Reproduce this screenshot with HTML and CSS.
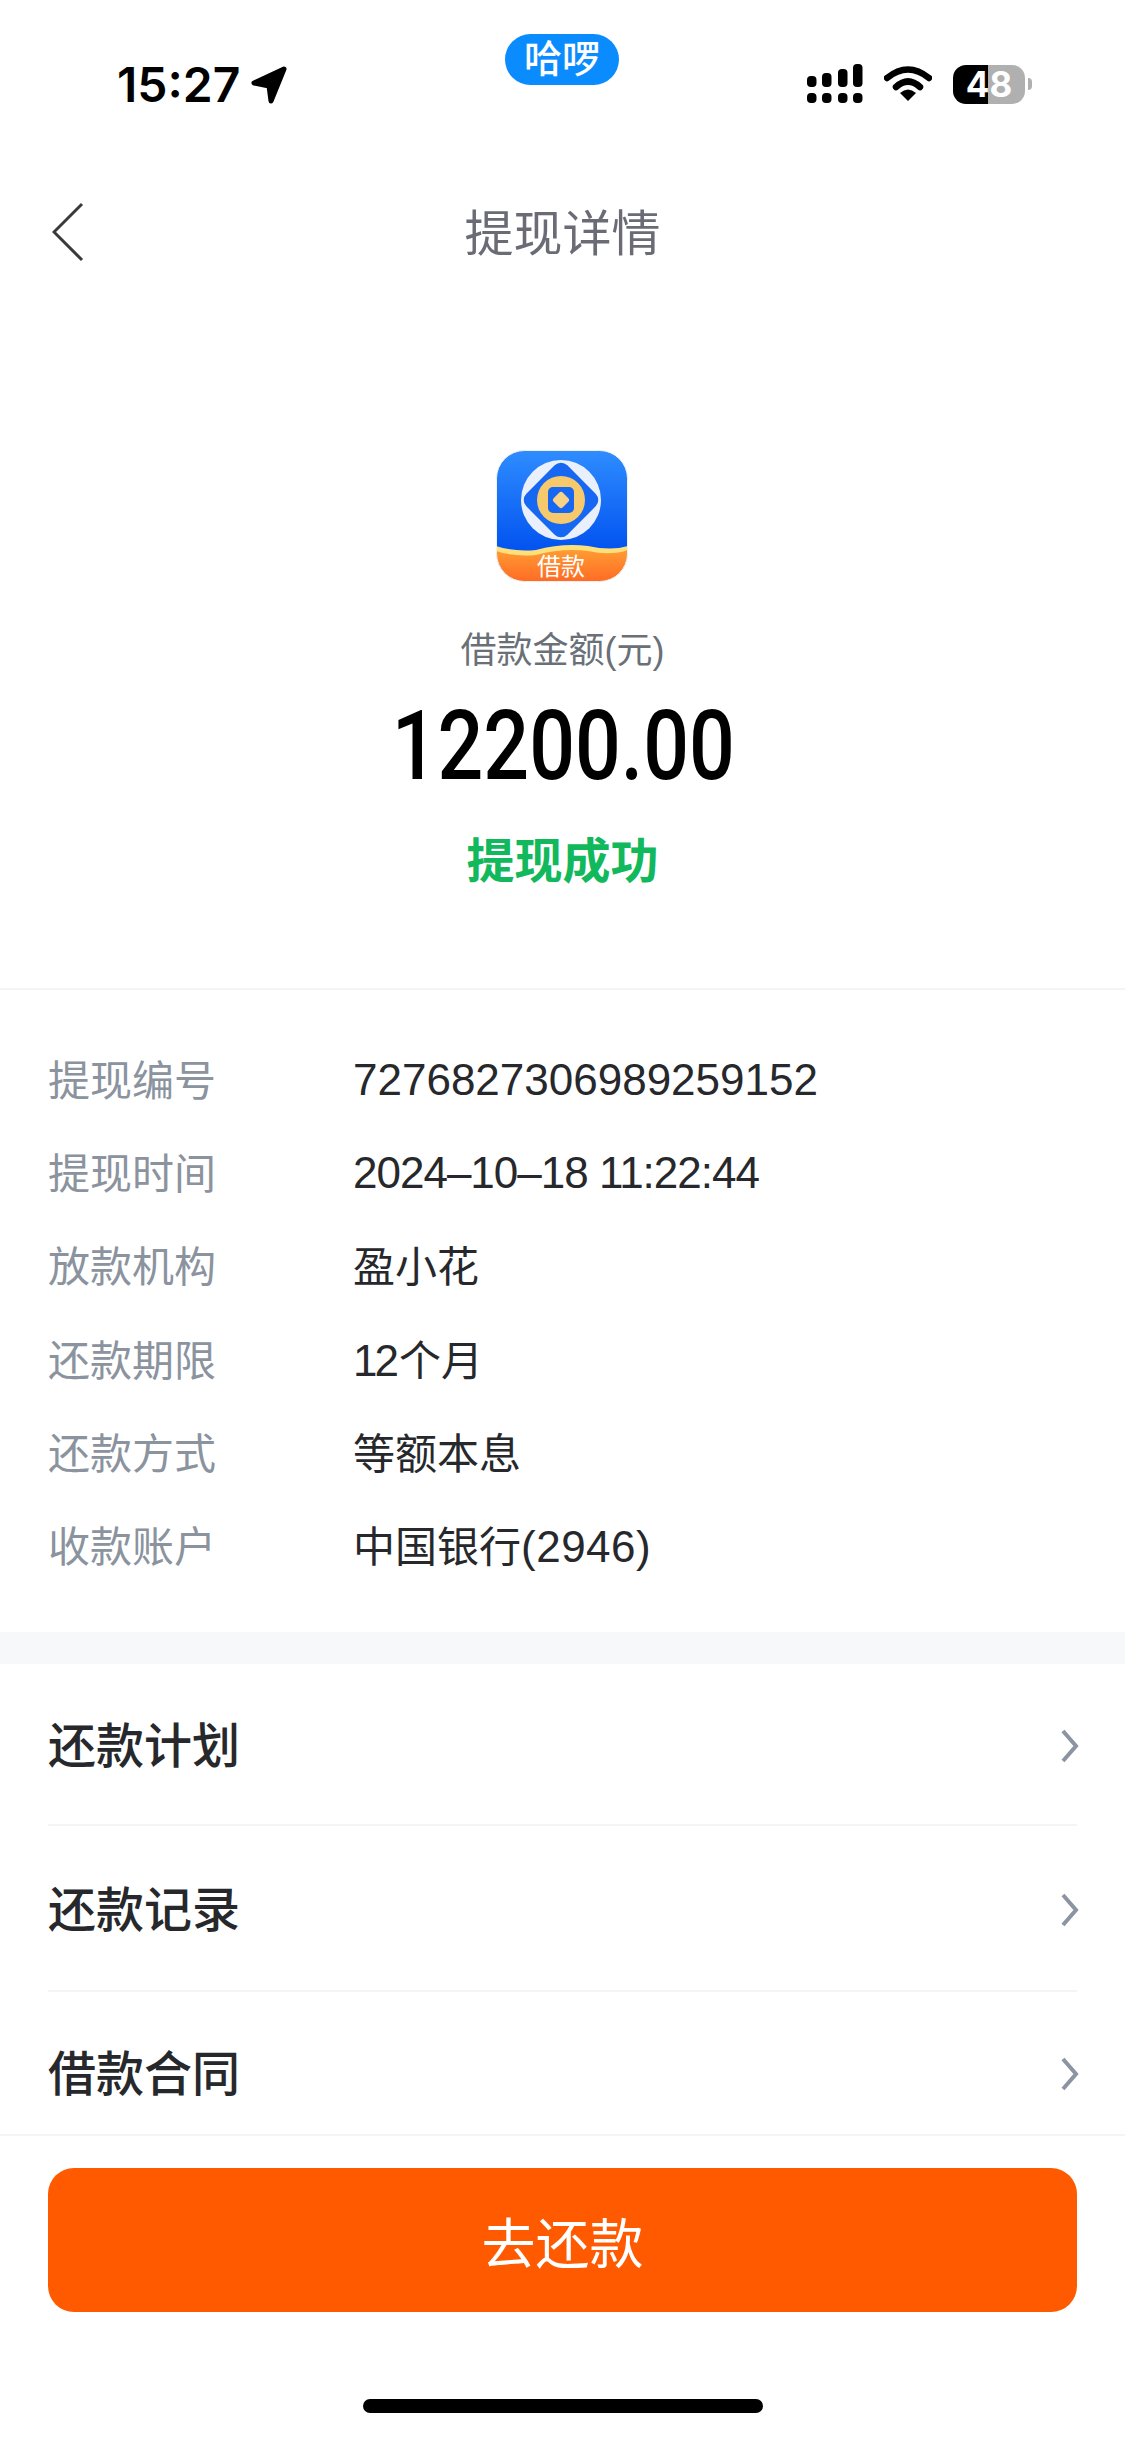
FILE: index.html
```html
<!DOCTYPE html>
<html lang="zh-CN">
<head>
    <meta charset="UTF-8">
    <meta name="viewport" content="width=device-width, initial-scale=1.0">
    <title>提现详情</title>
    <link rel="stylesheet" href="styles.css">
</head>
<body>
    <div class="screen">
        <div class="status-bar">
            <div class="status-left">
                <span class="clock">15:27</span>
                <svg class="arrow" width="36" height="38" viewBox="0 0 36 38"><path d="M33 3 L3 17 L18 20 L20 35 Z" fill="#000" stroke="#000" stroke-width="5" stroke-linejoin="round"/></svg>
            </div>
            <div class="hello-pill">哈啰</div>
            <div class="status-right">
                <svg width="56" height="40" viewBox="0 0 56 40">
                    <rect x="0" y="12" width="9.500" height="11" rx="4"/>
                    <rect x="15" y="9" width="9.500" height="14" rx="4"/>
                    <rect x="31" y="5" width="9.500" height="18" rx="4"/>
                    <rect x="46" y="0" width="9.500" height="23" rx="4"/>
                    <rect x="0" y="29" width="9.500" height="10" rx="4"/>
                    <rect x="15" y="29" width="9.500" height="10" rx="4"/>
                    <rect x="31" y="29" width="9.500" height="10" rx="4"/>
                    <rect x="46" y="29" width="9.500" height="10" rx="4"/>
                </svg>
                <svg class="wifi" width="48" height="36" viewBox="0 0 48 36">
                    <path d="M3 12 Q24 -5 45 12" fill="none" stroke="#000" stroke-width="6.500" stroke-linecap="round"/>
                    <path d="M12 21 Q24 10 36 21" fill="none" stroke="#000" stroke-width="6.500" stroke-linecap="round"/>
                    <path d="M16 27 Q24 20 32 27 L24 35 Z" fill="#000"/>
                </svg>
                <div class="battery">48</div>
                <div class="battery-nub"></div>
            </div>
        </div>

        <div class="nav-bar">
            <svg class="back-icon" width="32" height="60" viewBox="0 0 32 60"><path d="M30 2 L2 30 L30 58" fill="none" stroke="#3a3a3a" stroke-width="3"/></svg>
            <h1 class="nav-title">提现详情</h1>
        </div>

        <div class="summary">
            <svg class="app-logo" width="132" height="132" viewBox="0 0 132 132">
                <defs>
                    <linearGradient id="logoBlue" x1="0" y1="0" x2="0" y2="1">
                        <stop offset="0" stop-color="#2f8dff"/>
                        <stop offset="0.8" stop-color="#0050ef"/>
                    </linearGradient>
                    <linearGradient id="logoOrange" x1="0" y1="0" x2="0" y2="1">
                        <stop offset="0" stop-color="#ff9b33"/>
                        <stop offset="1" stop-color="#ff6a24"/>
                    </linearGradient>
                    <clipPath id="logoClip"><rect x="0.500" y="0.500" width="131" height="131" rx="28"/></clipPath>
                </defs>
                <g clip-path="url(#logoClip)">
                    <rect width="132" height="132" fill="url(#logoBlue)"/>
                    <circle cx="65" cy="50" r="40" fill="#e9f0fb"/>
                    <rect x="36" y="21" width="58" height="58" rx="9" fill="#1668f2" transform="rotate(45 65 50)"/>
                    <circle cx="65" cy="50" r="24" fill="#f6c96c"/>
                    <rect x="52" y="37" width="26" height="26" rx="5" fill="#1668f2"/>
                    <rect x="58.500" y="43.500" width="13" height="13" rx="3" fill="#f8d387" transform="rotate(45 65 50)"/>
                    <path d="M0 96 Q18 102 40 100 Q66 93 92 96 Q115 101 132 96 V132 H0 Z" fill="#fde07a"/>
                    <path d="M0 101 Q18 107 40 105 Q66 98 92 101 Q115 106 132 100 V132 H0 Z" fill="url(#logoOrange)"/>
                    <text x="65" y="125" text-anchor="middle" class="logo-text">借款</text>
                </g>
                <rect x="0.500" y="0.500" width="131" height="131" rx="28" fill="none" stroke="#f1f1f1"/>
            </svg>
            <div class="amount-label">借款金额(元)</div>
            <div class="amount">12200.00</div>
            <div class="status-text">提现成功</div>
        </div>

        <div class="details">
            <div class="detail-row"><span class="detail-key">提现编号</span><span class="detail-value"><span class="digits">7276827306989259152</span></span></div>
            <div class="detail-row"><span class="detail-key">提现时间</span><span class="detail-value"><span class="digits date">2024–10–18 11:22:44</span></span></div>
            <div class="detail-row"><span class="detail-key">放款机构</span><span class="detail-value">盈小花</span></div>
            <div class="detail-row"><span class="detail-key">还款期限</span><span class="detail-value"><span class="term">12</span>个月</span></div>
            <div class="detail-row"><span class="detail-key">还款方式</span><span class="detail-value">等额本息</span></div>
            <div class="detail-row"><span class="detail-key">收款账户</span><span class="detail-value">中国银行<span class="card-tail">(2946)</span></span></div>
        </div>

        <div class="band"></div>

        <div class="links">
            <div class="link-row">
                <span>还款计划</span>
                <svg width="18" height="34" viewBox="0 0 18 34"><path d="M2 2 L15 17 L2 32" fill="none" stroke="#8b94a0" stroke-width="4"/></svg>
            </div>
            <div class="link-row">
                <span>还款记录</span>
                <svg width="18" height="34" viewBox="0 0 18 34"><path d="M2 2 L15 17 L2 32" fill="none" stroke="#8b94a0" stroke-width="4"/></svg>
            </div>
            <div class="link-row">
                <span>借款合同</span>
                <svg width="18" height="34" viewBox="0 0 18 34"><path d="M2 2 L15 17 L2 32" fill="none" stroke="#8b94a0" stroke-width="4"/></svg>
            </div>
        </div>

        <div class="footer">
            <button class="repay-button">去还款</button>
            <div class="home-indicator"></div>
        </div>
    </div>
</body>
</html>
```

FILE: styles.css
```css
body {
    margin: 0;
    background-color: #fff;
    font-family: "Liberation Sans", "Noto Sans CJK SC", sans-serif;
}

.screen {
    width: 1125px;
    height: 2439px;
    display: flex;
    flex-direction: column;
    overflow: hidden;
}

/* status bar */
.status-bar {
    height: 134px;
    padding: 34px 93px 0 117px;
    box-sizing: border-box;
    display: grid;
    grid-template-columns: 388px 114px 1fr;
    align-items: start;
}

.status-left {
    display: flex;
    align-items: center;
    gap: 11px;
    margin-top: 30px;
}

.clock {
    font-family: "Inter", sans-serif;
    font-size: 48px;
    line-height: 42px;
    font-weight: 600;
    color: #000;
}

.arrow {
    display: block;
}

.hello-pill {
    height: 51px;
    border-radius: 26px;
    background-color: #0a8cff;
    color: #fff;
    font-size: 38px;
    line-height: 51px;
    text-align: center;
    font-weight: 500;
}

.status-right {
    display: flex;
    justify-content: flex-end;
    align-items: center;
    margin-top: 30px;
}

.wifi {
    margin-left: 21px;
}

.battery {
    width: 72px;
    height: 39px;
    margin-left: 21px;
    border-radius: 13px;
    background: linear-gradient(90deg, #000 0, #000 35px, #b0b0b0 35px, #b0b0b0 100%);
    color: #fff;
    font-family: "Inter", sans-serif;
    font-size: 35px;
    line-height: 39px;
    font-weight: 700;
    text-align: center;
}

.battery-nub {
    width: 4px;
    height: 12px;
    margin-left: 3px;
    border-radius: 0 6px 6px 0;
    background-color: #b0b0b0;
}

/* nav */
.nav-bar {
    height: 196px;
    padding-left: 52px;
    display: flex;
    align-items: center;
    position: relative;
}

.back-icon {
    display: block;
}

.nav-title {
    position: absolute;
    left: 0;
    right: 0;
    margin: 0 0 6px;
    text-align: center;
    font-size: 49px;
    font-weight: 400;
    color: #6b6b76;
}

/* summary */
.summary {
    height: 660px;
    padding-top: 120px;
    box-sizing: border-box;
    display: flex;
    flex-direction: column;
    align-items: center;
    border-bottom: 2px solid #f3f4f6;
}

.app-logo {
    display: block;
    margin-right: 2px;
}

.logo-text {
    fill: #fff;
    font-size: 24px;
}

.amount-label {
    margin-top: 42px;
    font-size: 36px;
    line-height: 54px;
    color: #6a7078;
}

.amount {
    margin-top: 18px;
    margin-left: 2px;
    font-family: "Roboto", sans-serif;
    font-size: 96px;
    line-height: 100px;
    font-weight: 500;
    color: #000;
    transform: scaleX(0.84);
}

.status-text {
    margin-top: 33px;
    font-size: 48px;
    line-height: 66px;
    font-weight: 700;
    color: #11b85c;
}

/* details */
.details {
    height: 642px;
    padding: 41px 48px 0;
    box-sizing: border-box;
}

.detail-row {
    height: 93.200px;
    display: flex;
    align-items: center;
    font-size: 42px;
}

.detail-key {
    width: 305px;
    color: #8a939e;
}

.detail-value {
    color: #26282c;
}

/* digits sit a little high next to the CJK glyphs */
.digits {
    font-size: 44px;
    vertical-align: -6px;
}

.date {
    letter-spacing: -1px;
}

.term {
    font-size: 44px;
    letter-spacing: -3px;
    margin-right: 3px;
}

.card-tail {
    font-size: 44px;
    letter-spacing: 0.500px;
}

.band {
    height: 32px;
    background-color: #f7f8fa;
}

/* links */
.links {
    height: 470px;
    padding: 0 48px;
    overflow: hidden;
}

.link-row {
    height: 166px;
    padding-bottom: 4px;
    box-sizing: border-box;
    display: flex;
    align-items: center;
    justify-content: space-between;
    border-bottom: 2px solid #f3f4f6;
    font-size: 48px;
    font-weight: 500;
    color: #26282c;
}

.link-row:first-child {
    height: 162px;
}

.link-row:last-child {
    padding-bottom: 10px;
    border-bottom: none;
}

.link-row svg {
    margin: 8px -2px 0 0;
}

/* footer */
.footer {
    flex: 1;
    border-top: 2px solid #f3f4f6;
    padding: 32px 48px 0;
    display: flex;
    flex-direction: column;
    align-items: center;
}

.repay-button {
    width: 100%;
    height: 144px;
    border: none;
    border-radius: 26px;
    background-color: #ff5a00;
    color: #fff;
    font-family: inherit;
    font-size: 54px;
    padding: 0;
}

.home-indicator {
    width: 400px;
    height: 14px;
    margin-top: 87px;
    border-radius: 7px;
    background-color: #000;
}
```
